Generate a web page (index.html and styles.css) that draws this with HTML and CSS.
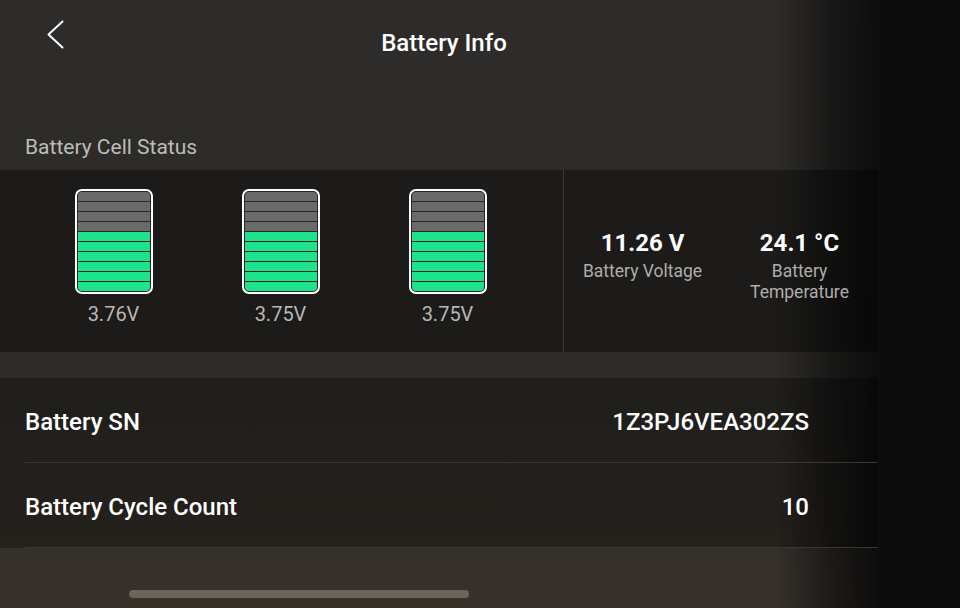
FILE: index.html
```html
<!DOCTYPE html>
<html lang="en">
<head>
<meta charset="UTF-8">
<meta name="viewport" content="width=device-width, initial-scale=1.0">
<title>Battery Info</title>
<link rel="stylesheet" href="styles.css">
</head>
<body>
<div id="screen">
    <div id="main">
        <div class="topBar">
            <button class="backBtn" aria-label="Back">
                <svg width="17" height="29" viewBox="0 0 17 29"><path d="M15.5 1.5 L1.5 14.5 L15.5 27.5" fill="none" stroke="#fff" stroke-width="2" stroke-linecap="round" stroke-linejoin="round"/></svg>
            </button>
            <h1 class="title">Battery Info</h1>
        </div>

        <div class="sectionTitle">Battery Cell Status</div>

        <div class="cellPanel">
            <div class="cellList">
                <div class="cell">
                    <div class="cellBox">
                        <i class="seg"></i><i class="seg"></i><i class="seg"></i><i class="seg"></i>
                        <i class="seg on"></i><i class="seg on"></i><i class="seg on"></i><i class="seg on"></i><i class="seg on"></i><i class="seg on"></i>
                    </div>
                    <div class="cellVolt">3.76V</div>
                </div>
                <div class="cell">
                    <div class="cellBox">
                        <i class="seg"></i><i class="seg"></i><i class="seg"></i><i class="seg"></i>
                        <i class="seg on"></i><i class="seg on"></i><i class="seg on"></i><i class="seg on"></i><i class="seg on"></i><i class="seg on"></i>
                    </div>
                    <div class="cellVolt">3.75V</div>
                </div>
                <div class="cell">
                    <div class="cellBox">
                        <i class="seg"></i><i class="seg"></i><i class="seg"></i><i class="seg"></i>
                        <i class="seg on"></i><i class="seg on"></i><i class="seg on"></i><i class="seg on"></i><i class="seg on"></i><i class="seg on"></i>
                    </div>
                    <div class="cellVolt">3.75V</div>
                </div>
            </div>
            <div class="statList">
                <div class="stat">
                    <div class="statValue">11.26 V</div>
                    <div class="statLabel">Battery Voltage</div>
                </div>
                <div class="stat">
                    <div class="statValue">24.1 °C</div>
                    <div class="statLabel">Battery Temperature</div>
                </div>
            </div>
        </div>

        <div class="infoList">
            <div class="infoRow">
                <span class="infoName">Battery SN</span>
                <span class="infoValue">1Z3PJ6VEA302ZS</span>
            </div>
            <div class="infoRow">
                <span class="infoName">Battery Cycle Count</span>
                <span class="infoValue">10</span>
            </div>
        </div>

        <div class="homeBar"></div>
    </div>
    <div id="edge"></div>
</div>
</body>
</html>
```

FILE: styles.css
```css
*{
    box-sizing: border-box;
}
body{
    margin: 0;
    background-color: #0c0c0c;
    font-family: Roboto, "Noto Sans", sans-serif;
    color: #fff;
}
#screen{
    width: 960px;
    height: 608px;
    display: flex;
    overflow: hidden;
}
#main{
    width: 880px;
    height: 100%;
    display: flex;
    flex-direction: column;
    /* fades into the dark strip on the right */
    background:
        linear-gradient(90deg, rgba(12,12,12,0) 775px, rgba(12,12,12,0.6) 830px, rgba(12,12,12,0.92) 870px, #0c0c0c 880px),
        linear-gradient(180deg, #2e2c2a 0%, #2d2b28 55%, #37312a 100%);
}
#edge{
    width: 80px;
    background-color: #0c0c0c;
}

/* top bar */
.topBar{
    height: 86px;
    display: flex;
    align-items: center;
    justify-content: center;
    position: relative;
}
.backBtn{
    position: absolute;
    left: 47px;
    top: 20px;
    padding: 0;
    border: none;
    background: none;
}
.backBtn svg{
    display: block;
}
.title{
    margin: 0 0 0 8px;
    font-size: 24px;
    font-weight: 500;
}

.sectionTitle{
    margin-top: 49px;
    padding-left: 25px;
    height: 35px;
    font-size: 21px;
    color: #bdbcba;
}

/* cell panel */
.cellPanel{
    height: 182px;
    width: 878px;
    display: flex;
    background-color: rgba(0,0,0,0.37);
}
.cellList{
    width: 564px;
    padding: 19px 0 0 30px;
    display: grid;
    grid-template-columns: repeat(3, 167px);
    align-content: start;
    border-right: 1px solid #3b3937;
}
.cell{
    display: flex;
    flex-direction: column;
    align-items: center;
}
.cellBox{
    width: 78px;
    height: 105px;
    border: 2px solid #fff;
    border-radius: 7px;
    padding: 1px;
    display: flex;
    flex-direction: column;
    gap: 1.5px;
    background-color: #262626;
    overflow: hidden;
}
.seg{
    flex: 1;
    background-color: #6a6a6a;
}
.seg:first-child{
    border-radius: 4px 4px 0 0;
}
.seg:last-child{
    border-radius: 0 0 4px 4px;
}
.seg.on{
    background-color: #1ee38c;
}
.cellVolt{
    margin-top: 8px;
    font-size: 20px;
    color: #b8b7b5;
}

.statList{
    flex: 1;
    display: grid;
    grid-template-columns: 1fr 1fr;
    padding-top: 58px;
    align-content: start;
}
.stat{
    display: flex;
    flex-direction: column;
    align-items: center;
    text-align: center;
}
.statValue{
    font-size: 24px;
    font-weight: 700;
    line-height: 30px;
}
.statLabel{
    max-width: 140px;
    margin-top: 3px;
    font-size: 17.5px;
    line-height: 21px;
    color: #aeadab;
}

/* info rows */
.infoList{
    margin-top: 26px;
    width: 878px;
    background-color: rgba(0,0,0,0.3);
}
.infoRow{
    height: 85px;
    margin-left: 25px;
    padding: 4px 69px 0 0;
    display: flex;
    align-items: center;
    justify-content: space-between;
    border-bottom: 1px solid #3a3632;
    font-size: 24px;
    font-weight: 500;
}

.homeBar{
    width: 340px;
    height: 8px;
    margin: 42px 0 0 129px;
    border-radius: 4px;
    background-color: #6b665d;
}
```
